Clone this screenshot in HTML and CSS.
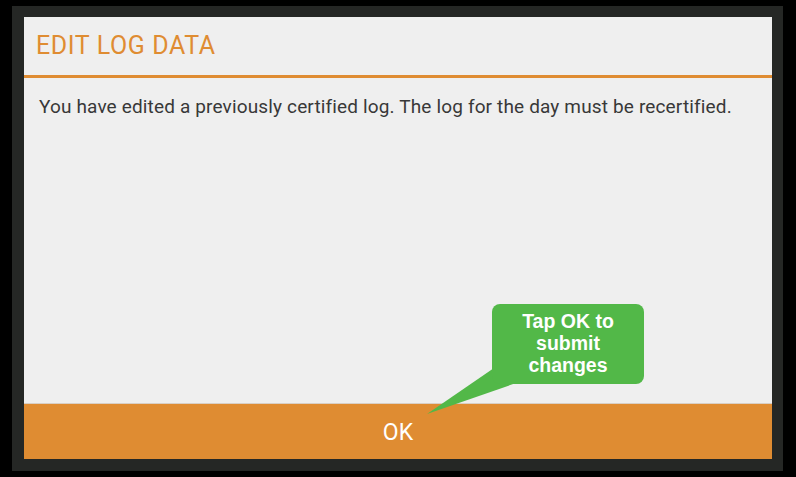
FILE: index.html
```html
<!DOCTYPE html>
<html>
<head>
<meta charset="utf-8">
<link rel="stylesheet" href="styles.css">
</head>
<body>
<div class="frame">
  <div class="dialog">
    <div class="title">EDIT LOG DATA</div>
    <div class="content">
      <p class="message">You have edited a previously certified log. The log for the day must be recertified.</p>
    </div>
    <div class="ok">OK</div>
    <div class="callout">
      <svg class="tail" width="100" height="60" viewBox="0 0 100 60">
        <polygon points="69,4 94,18 2,50" fill="#52b848"/>
      </svg>
      <div class="bubble">Tap OK to<br>submit<br>changes</div>
    </div>
  </div>
</div>
</body>
</html>
```

FILE: styles.css
```css
html, body {
  margin: 0;
  padding: 0;
  background: #000;
  width: 796px;
  height: 477px;
  overflow: hidden;
}
.frame {
  position: absolute;
  left: 12px;
  top: 6px;
  width: 771px;
  height: 465px;
  background: #252725;
  box-sizing: border-box;
  padding: 11px 11px 12px 12px;
}
.dialog {
  position: relative;
  width: 748px;
  height: 442px;
  background: #efefef;
  display: flex;
  flex-direction: column;
  font-family: Roboto, "Liberation Sans", sans-serif;
}
.title {
  height: 61px;
  box-sizing: border-box;
  border-bottom: 3px solid #df8c32;
  color: #df8c32;
  font-size: 25px;
  letter-spacing: 0.6px;
  line-height: 28px;
  padding: 15px 0 0 12px;
}
.content {
  flex: 1;
  padding: 18px 15px 0 15px;
}
.message {
  margin: 0;
  color: #383838;
  font-size: 19px;
  letter-spacing: 0.15px;
  line-height: 22px;
}
.ok {
  height: 56px;
  background: #df8c32;
  border-top: 1px solid #d9cfc4;
  box-sizing: border-box;
  color: #fff;
  font-size: 23px;
  display: flex;
  align-items: center;
  justify-content: center;
  padding-top: 2px;
}
.callout {
  position: absolute;
  left: 401px;
  top: 287px;
}
.tail {
  position: absolute;
  left: 0;
  top: 60px;
}
.bubble {
  position: relative;
  margin-left: 67px;
  width: 152px;
  height: 80px;
  box-sizing: border-box;
  background: #52b848;
  border-radius: 8px;
  color: #fff;
  font-family: "Liberation Sans", Arial, sans-serif;
  font-weight: bold;
  font-size: 19.5px;
  line-height: 22px;
  text-align: center;
  padding-top: 6px;
}
```
